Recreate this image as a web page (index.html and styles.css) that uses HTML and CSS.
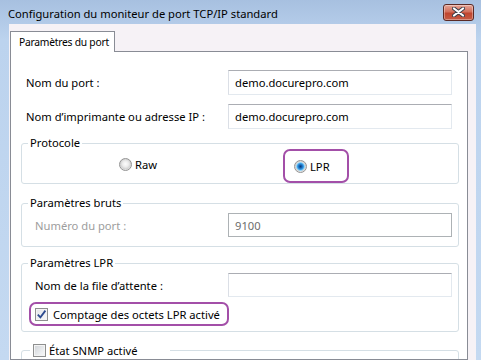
FILE: index.html
```html
<!DOCTYPE html>
<html lang="fr">
<head>
    <meta charset="UTF-8">
    <title>Configuration du moniteur de port TCP/IP standard</title>
    <link rel="stylesheet" href="styles.css">
</head>
<body>
    <div class="window">
        <div class="titlebar">
            <span class="title">Configuration du moniteur de port TCP/IP standard</span>
            <button class="close" type="button">
                <svg width="13" height="10" viewBox="0 0 13 10">
                    <path d="M2 1.5 L11 8.5 M11 1.5 L2 8.5" stroke="#3a3f4a" stroke-width="4" stroke-linecap="round"/>
                    <path d="M2 1.5 L11 8.5 M11 1.5 L2 8.5" stroke="#fff" stroke-width="2.2" stroke-linecap="round"/>
                </svg>
            </button>
        </div>
        <div class="client">
            <div class="tabs">
                <div class="tab">Paramètres du port</div>
                <div class="tab-rest"></div>
            </div>
            <div class="panel">
                <div class="field first">
                    <label>Nom du port :</label>
                    <input class="textbox" type="text" value="demo.docurepro.com">
                </div>
                <div class="field">
                    <label>Nom d’imprimante ou adresse IP :</label>
                    <input class="textbox" type="text" value="demo.docurepro.com">
                </div>

                <fieldset class="group protocol">
                    <legend>Protocole</legend>
                    <div class="choices">
                        <span class="option raw"><span class="radio"></span>Raw</span>
                        <span class="option lpr mark"><span class="radio checked"></span>LPR</span>
                    </div>
                </fieldset>

                <fieldset class="group raw-settings">
                    <legend>Paramètres bruts</legend>
                    <div class="field inset disabled">
                        <label>Numéro du port :</label>
                        <input class="textbox" type="text" value="9100" disabled>
                    </div>
                </fieldset>

                <fieldset class="group lpr-settings">
                    <legend>Paramètres LPR</legend>
                    <div class="field inset">
                        <label>Nom de la file d’attente :</label>
                        <input class="textbox" type="text" value="">
                    </div>
                    <div class="check-row mark">
                        <span class="checkbox">
                            <svg width="11" height="11" viewBox="0 0 11 11">
                                <path d="M1.8 5.6 L4.4 8.4 L9.4 1.6" fill="none" stroke="#2c4a8f" stroke-width="1.8"/>
                            </svg>
                        </span>
                        Comptage des octets LPR activé
                    </div>
                </fieldset>

                <fieldset class="group snmp">
                    <legend><span class="checkbox"></span>État SNMP activé</legend>
                    <div class="snmp-body"></div>
                </fieldset>
            </div>
        </div>
    </div>
</body>
</html>
```

FILE: styles.css
```css
* { box-sizing: border-box; }
html, body { margin: 0; height: 100%; }
body {
    font-family: "Noto Sans", sans-serif;
    font-size: 11.2px;
    color: #000;
    overflow: hidden;
}
.window {
    height: 360px;
    overflow: hidden;
    display: flex;
    flex-direction: column;
    background: linear-gradient(to bottom, #a7c0e0, #bcd3ee 40px, #c4d9f1);
}

/* title bar */
.titlebar {
    height: 24px;
    flex: none;
    display: flex;
    align-items: center;
    justify-content: space-between;
    padding: 0 7px 0 8px;
}
.title { font-size: 11.2px; padding-top: 2px; white-space: nowrap; }
.close {
    width: 31px;
    height: 17px;
    padding: 0;
    display: flex;
    align-items: center;
    justify-content: center;
    border: 1px solid #5b2a25;
    border-radius: 3px;
    background: linear-gradient(to bottom, #e6a597, #d2705c 45%, #c0452f 55%, #c65c45);
    box-shadow: inset 0 0 0 1px rgba(255, 255, 255, 0.35);
}

/* client area */
.client {
    flex: 1;
    min-height: 0;
    display: flex;
    flex-direction: column;
    margin: 0 5px 0 9px;
    padding: 7px 8px 0 1px;
    background: #f6f2f6;
}
.tabs { display: flex; height: 21px; flex: none; }
.tab {
    width: 105px;
    flex: none;
    white-space: nowrap;
    border: 1px solid #898c95;
    border-bottom: none;
    background: #fff;
    padding-left: 8px;
    font-size: 10.3px;
    letter-spacing: -0.25px;
    line-height: 20px;
}
.tab-rest { flex: 1; border-bottom: 1px solid #898c95; }
.panel {
    flex: 1;
    min-height: 0;
    overflow: hidden;
    background: #fff;
    border: 1px solid #898c95;
    border-top: none;
    padding: 0 8px 0 10px;
}

/* label + text box rows */
.field {
    display: flex;
    align-items: center;
    justify-content: space-between;
    padding: 0 7px 0 5px;
    margin-top: 9px;
}
.field.first { margin-top: 18px; }
.textbox {
    width: 224px;
    height: 25px;
    margin: 0;
    padding: 0 6px;
    font: inherit;
    color: #000;
    background: #fff;
    border: 1px solid #e3e9ef;
    border-top-color: #abadb3;
    border-left-color: #dbdfe6;
    border-radius: 0;
    outline: none;
}
.field.inset { margin-top: 0; padding: 4px 6px 0 13px; }
.field.inset .textbox { height: 24px; }
.disabled label { color: #9d9d9d; }
.disabled .textbox {
    border-color: #adb2b5;
    color: #6d6d6d;
    background: #fff;
}

/* group boxes */
.group {
    margin: 0;
    padding: 0;
    min-width: 0;
    border: 1px solid #d5dfe5;
    border-radius: 3px;
}
.group legend {
    margin-left: 6px;
    padding: 0 2px;
    line-height: 12px;
}
.protocol { margin-top: 8px; }
.raw-settings { margin-top: 13px; padding-bottom: 9px; }
.lpr-settings { margin-top: 10px; padding-bottom: 5px; }
.snmp { margin-top: 12px; }
.snmp-body { height: 20px; }

.mark {
    border: 2px solid #a34fa8;
    border-radius: 7px;
}

/* radio buttons */
.choices {
    display: flex;
    align-items: center;
    height: 34px;
    padding-left: 97px;
}
.option { display: flex; align-items: center; gap: 3px; }
.raw { width: 164px; margin-top: -3px; }
.lpr { width: 66px; height: 34px; padding-left: 9px; }
.radio {
    width: 13px;
    height: 13px;
    border-radius: 50%;
    border: 1px solid #939393;
    background: radial-gradient(circle at 50% 45%, #fdfdfd 0, #ececec 3px, #d2d2d2 5px, #e9e9e9 6px);
}
.radio.checked {
    background:
        radial-gradient(circle at 50% 50%, #0c3a73 0, #1664b4 1.5px, #3a9de6 3px, #8fd3f7 4px, transparent 4.6px),
        radial-gradient(circle at 50% 45%, #fdfdfd 0, #ececec 3px, #d2d2d2 5px, #e9e9e9 6px);
}

/* check boxes */
.check-row {
    display: flex;
    align-items: center;
    gap: 5px;
    width: 200px;
    height: 24px;
    margin: 5px 0 0 7px;
    padding-left: 4px;
}
.checkbox {
    width: 13px;
    height: 13px;
    flex: none;
    display: flex;
    align-items: center;
    justify-content: center;
    border: 1px solid #8e8f8f;
    background: linear-gradient(135deg, #cfd2d6, #eef0f2 70%, #f7f7f7);
    box-shadow: inset 0 0 0 1px #f4f4f4;
}
.check-row .checkbox {
    background: linear-gradient(135deg, #e4e6ea, #f8f8f8);
}
.snmp legend {
    display: flex;
    align-items: center;
    gap: 3px;
    width: 140px;
    margin-left: 8px;
    padding: 0 3px;
    line-height: 13px;
}
```
